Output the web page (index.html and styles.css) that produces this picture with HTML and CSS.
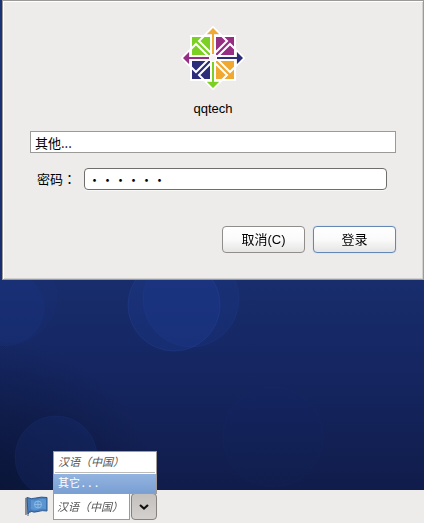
FILE: index.html
```html
<!DOCTYPE html>
<html lang="zh-CN">
<head>
<meta charset="utf-8">
<meta name="viewport" content="width=device-width, initial-scale=1">
<title>qqtech</title>
<link rel="stylesheet" href="styles.css">
</head>
<body>
<svg class="wallpaper" viewBox="0 0 424 523" preserveAspectRatio="xMidYMid slice" aria-hidden="true">
  <defs>
    <linearGradient id="sky" x1="0" y1="0" x2="0" y2="1">
      <stop offset="0" stop-color="#1a3478"/>
      <stop offset=".54" stop-color="#182d6c"/>
      <stop offset=".7" stop-color="#152662"/>
      <stop offset=".94" stop-color="#101c4a"/>
    </linearGradient>
    <radialGradient id="shade" gradientUnits="userSpaceOnUse" cx="-10" cy="510" r="170">
      <stop offset="0" stop-color="#091333" stop-opacity=".85"/>
      <stop offset="1" stop-color="#091333" stop-opacity="0"/>
    </radialGradient>
  </defs>
  <rect width="424" height="523" fill="url(#sky)"/>
  <g fill="#2245a8" stroke="#3159c0">
    <circle cx="6" cy="308" r="38" fill-opacity=".12" stroke-opacity=".05"/>
    <circle cx="10" cy="296" r="47" fill-opacity=".05" stroke-opacity=".03"/>
    <circle cx="191" cy="299" r="48" fill-opacity=".16" stroke-opacity=".1"/>
    <circle cx="174" cy="305" r="46" fill-opacity=".2" stroke-opacity=".18"/>
    <circle cx="273" cy="437" r="50" fill-opacity=".03" stroke-opacity=".06"/>
  </g>
  <rect width="424" height="523" fill="url(#shade)"/>
  <circle cx="56" cy="457" r="41" fill="#2245a8" fill-opacity=".14" stroke="#3159c0" stroke-opacity=".1"/>
</svg>

<main class="dialog">
  <header class="brand">
    <svg class="logo" width="64" height="64" viewBox="-32 -32 64 64" aria-hidden="true">
      <g stroke="#fff" stroke-width="2">
        <path d="M-22-22H-2V-2H-22z" fill="#7bd023"/>
        <path d="M2-22H22V-2H2z" fill="#962f84"/>
        <path d="M-22 2H-2V22H-22z" fill="#2b2d7b"/>
        <path d="M2 2H22V22H2z" fill="#f0a830"/>
      </g>
      <g fill="none" stroke="#fff" stroke-width="2">
        <path d="M0-31L14-17L0-3L-14-17z"/>
        <path d="M0 31L14 17L0 3L-14 17z"/>
        <path d="M-31 0L-17-14L-3 0L-17 14z"/>
        <path d="M31 0L17-14L3 0L17 14z"/>
      </g>
      <path d="M-6-24L0-30L6-24H1V-4H-1V-24z" fill="#eeaa35"/>
      <path d="M-6 24L0 30L6 24H1V4H-1V24z" fill="#7bd023"/>
      <path d="M-24-6L-30 0L-24 6V1H-4V-1H-24z" fill="#962f84"/>
      <path d="M24-6L30 0L24 6V1H4V-1H24z" fill="#2b2d7b"/>
      <circle r="3" fill="#f7f4f6"/>
    </svg>
    <h1 class="host">qqtech</h1>
  </header>

  <form class="login">
    <input class="user" type="text" value="其他..." aria-label="用户">
    <div class="password-row">
      <label for="password" lang="zh-TW">密码：</label>
      <input id="password" class="password" type="password" value="secret">
    </div>
    <div class="actions">
      <button class="btn" type="button">取消(C)</button>
      <button class="btn btn-default" type="button">登录</button>
    </div>
  </form>
</main>

<footer class="panel">
  <svg class="flag" width="24" height="22" viewBox="0 0 24 22" aria-hidden="true">
    <path d="M1 2L3 1V18L1 19z" fill="#b4bac0"/>
    <path d="M2 2V19M4 3V20M6 2V17" stroke="#59636e" fill="none"/>
    <path d="M3 1.500Q7 3.500 12 2T23 1.500V15Q18 14 14 15.500T6 15L4 18z" fill="#4a80bd" stroke="#2d5a91"/>
    <path d="M7 4Q11 5 15 3.500T22 3.500V13Q17 12.500 14 13.500T7 13z" fill="#5c96d2"/>
    <g fill="none" stroke="#9cc4e8" stroke-opacity=".7"><circle cx="14" cy="8.500" r="3.500"/><path d="M10.500 8.500H17.500M14 5V12"/></g>
  </svg>
  <div class="language">
    <select class="language-select" aria-label="语言">
      <option>汉语（中国）</option>
    </select>
    <button class="language-toggle" type="button" aria-label="选择语言">
      <svg width="12" height="8" viewBox="0 0 12 8" aria-hidden="true"><path d="M2 2L6 5.500L10 2" fill="none" stroke="#111" stroke-width="2.200"/></svg>
    </button>
    <div class="menu">
      <button class="menu-item menu-item-language" type="button">汉语（中国）</button>
      <button class="menu-item menu-item-active" type="button">其它<span class="dots">...</span></button>
    </div>
  </div>
</footer>
</body>
</html>
```

FILE: styles.css
```css
* {
  box-sizing: border-box;
}

body {
  margin: 0;
  min-height: 100vh;
  display: flex;
  flex-direction: column;
  justify-content: space-between;
  background: #142560;
  color: #000;
  font: 13px/18px "Liberation Sans", "Noto Sans CJK SC", sans-serif;
}

input,
select,
button {
  font: inherit;
  color: inherit;
}

.wallpaper {
  position: fixed;
  inset: 0;
  z-index: -1;
  width: 100%;
  height: 100%;
}

.dialog {
  margin-left: 2px;
  padding: 25px 27px 26px;
  border: 1px solid #9b9a98;
  background: #edeceb;
  box-shadow: inset 1px 1px #fff, inset -1px -1px #d2d0cd;
}

.brand {
  display: flex;
  flex-direction: column;
  align-items: center;
  gap: 10px;
}

.logo {
  display: block;
}

.host {
  margin: 0;
  font-size: 13px;
  font-weight: 400;
}

.login {
  display: flex;
  flex-direction: column;
  margin-top: 13px;
}

.user {
  width: 100%;
  height: 22px;
  padding: 0 4px;
  border: 1px solid #9b9a98;
  background: #fff;
  font-family: "Noto Sans CJK SC", sans-serif;
}

.password-row {
  display: flex;
  align-items: center;
  gap: 8px;
  margin-top: 15px;
  padding: 0 9px 0 7px;
}

.password-row label {
  font-family: "Noto Sans CJK TC", sans-serif;
}

.password {
  flex: 1;
  min-width: 0;
  height: 22px;
  padding: 0 3px;
  border: 1px solid #6f6e6a;
  border-radius: 4px;
  background: #fff;
  box-shadow: 0 1px #f8f8f7;
  font-family: "Noto Sans CJK SC", sans-serif;
}

.actions {
  display: flex;
  justify-content: flex-end;
  gap: 8px;
  margin-top: 36px;
}

.btn {
  width: 83px;
  height: 27px;
  padding: 0;
  border: 1px solid #8f8e8b;
  border-radius: 4px;
  background: linear-gradient(#fff, #fafafa 50%, #e6e5e4);
}

.btn-default {
  border-color: #6388b8;
  box-shadow: 0 0 1px #8fb0da;
}

.panel {
  display: flex;
  align-items: center;
  gap: 5px;
  height: 33px;
  padding-left: 24px;
  background: #edeceb;
}

.language {
  position: relative;
  display: flex;
  gap: 1px;
  font-size: 11px;
}

.language-select {
  appearance: none;
  width: 77px;
  height: 27px;
  padding: 0 3px;
  border: 1px solid #9b9a98;
  border-radius: 0;
  background: #fff;
  color: #555;
  font-style: italic;
}

.language-toggle {
  display: grid;
  place-items: center;
  width: 26px;
  height: 27px;
  padding: 0;
  border: 1px solid #85817d;
  border-radius: 4px;
  background: linear-gradient(#c4c0bd, #d3d0cd);
}

.menu {
  position: absolute;
  left: 0;
  right: 0;
  bottom: 26px;
  display: flex;
  flex-direction: column;
  gap: 1px;
  border: 1px solid #a19c9a;
  background: #fff;
}

.menu-item {
  height: 19px;
  padding: 0 4px;
  border: 0;
  background: #fff;
  text-align: left;
}

.menu-item-language {
  height: 21px;
  margin: 0 1px;
  padding: 0 3px;
  border-bottom: 1px solid #bdbbb8;
  color: #555;
  font-style: italic;
}

.menu-item-active {
  background: linear-gradient(#93b4e0, #7a9fd2);
  color: #fff;
}

.dots {
  font-family: "Liberation Mono", monospace;
}
```
